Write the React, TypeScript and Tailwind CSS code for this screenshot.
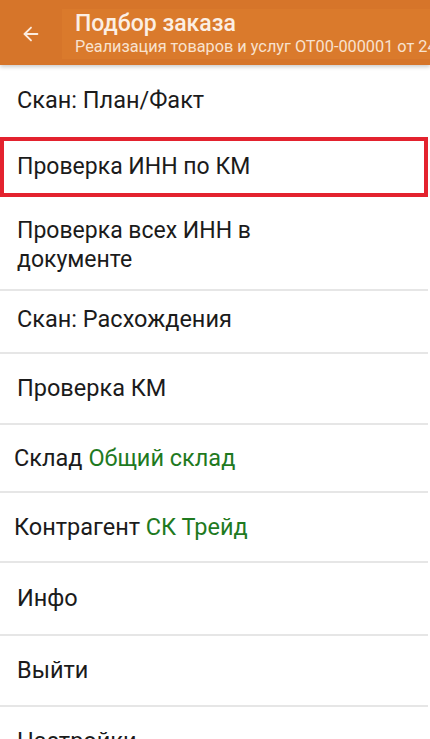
import { ArrowLeft } from 'lucide-react';

type Row = {
  label: string;
  value?: string;
  h: string;
  pad: string;
  size?: string;
  line?: boolean;
};

const rows: Row[] = [
  { label: 'Проверка всех ИНН в документе', h: 'h-[92px]', pad: 'pl-[17px] pt-[4px]', size: 'text-[23px]' },
  { label: 'Скан: Расхождения', h: 'h-[63px]', pad: 'pl-[17px] pb-[5px]', line: true },
  { label: 'Проверка КМ', h: 'h-[71px]', pad: 'pl-[17px]', line: true },
  { label: 'Склад', value: 'Общий склад', h: 'h-[68px]', pad: 'pl-[14px]', line: true },
  { label: 'Контрагент', value: 'СК Трейд', h: 'h-[70px]', pad: 'pl-[14px]', line: true },
  { label: 'Инфо', h: 'h-[73px]', pad: 'pl-[17px]', line: true },
  { label: 'Выйти', h: 'h-[71px]', pad: 'pl-[17px]', line: true },
  { label: 'Настройки', h: 'h-[71px]', pad: 'pl-[17px]', line: true },
];

const MenuRow = ({ row }: { row: Row }) => (
  <div
    className={`${row.h} ${row.pad} ${row.size ?? 'text-[23.5px]'} flex items-center pr-20 mr-[2px] leading-[29px] text-[#1b1b1b] ${
      row.line ? 'border-t-2 border-[#e6e6e6]' : ''
    }`}
  >
    <span>
      {row.label}
      {row.value && <span className="text-[#1f7a1f]"> {row.value}</span>}
    </span>
  </div>
);

export default function App() {
  return (
    <div className="w-[430px] h-[739px] overflow-hidden bg-white font-['Roboto',sans-serif]">
      {/* Header */}
      <header className="h-[65px] bg-[#d6752a] flex items-center shadow-[0_2px_4px_rgba(0,0,0,0.2)] relative z-10">
        <div className="w-[62px] flex justify-center pt-[2px]">
          <ArrowLeft className="h-[22px] w-[22px] text-[#fbece0]" strokeWidth={2} />
        </div>
        <div className="flex-1 h-[50px] mt-[2px] bg-[#da7a2c] pl-[13px] flex flex-col justify-center overflow-hidden whitespace-nowrap">
          <div className="text-[23px] leading-[25px] font-medium text-[#fcefe4]">Подбор заказа</div>
          <div className="text-[16.3px] leading-[21px] text-[#f8e2cf]">
            Реализация товаров и услуг ОТ00-000001 от 24.03.2021
          </div>
        </div>
      </header>

      <div className="h-[72px] pl-[17px] flex items-center text-[23.5px] text-[#1b1b1b]">Скан: План/Факт</div>

      {/* Highlighted row */}
      <div className="h-[60px] mr-[2px] border-4 border-[#e3222e] flex items-center pl-[13px] text-[23px] text-[#1b1b1b]">
        Проверка ИНН по КМ
      </div>

      {rows.map((row) => (
        <MenuRow key={row.label} row={row} />
      ))}
    </div>
  );
}
